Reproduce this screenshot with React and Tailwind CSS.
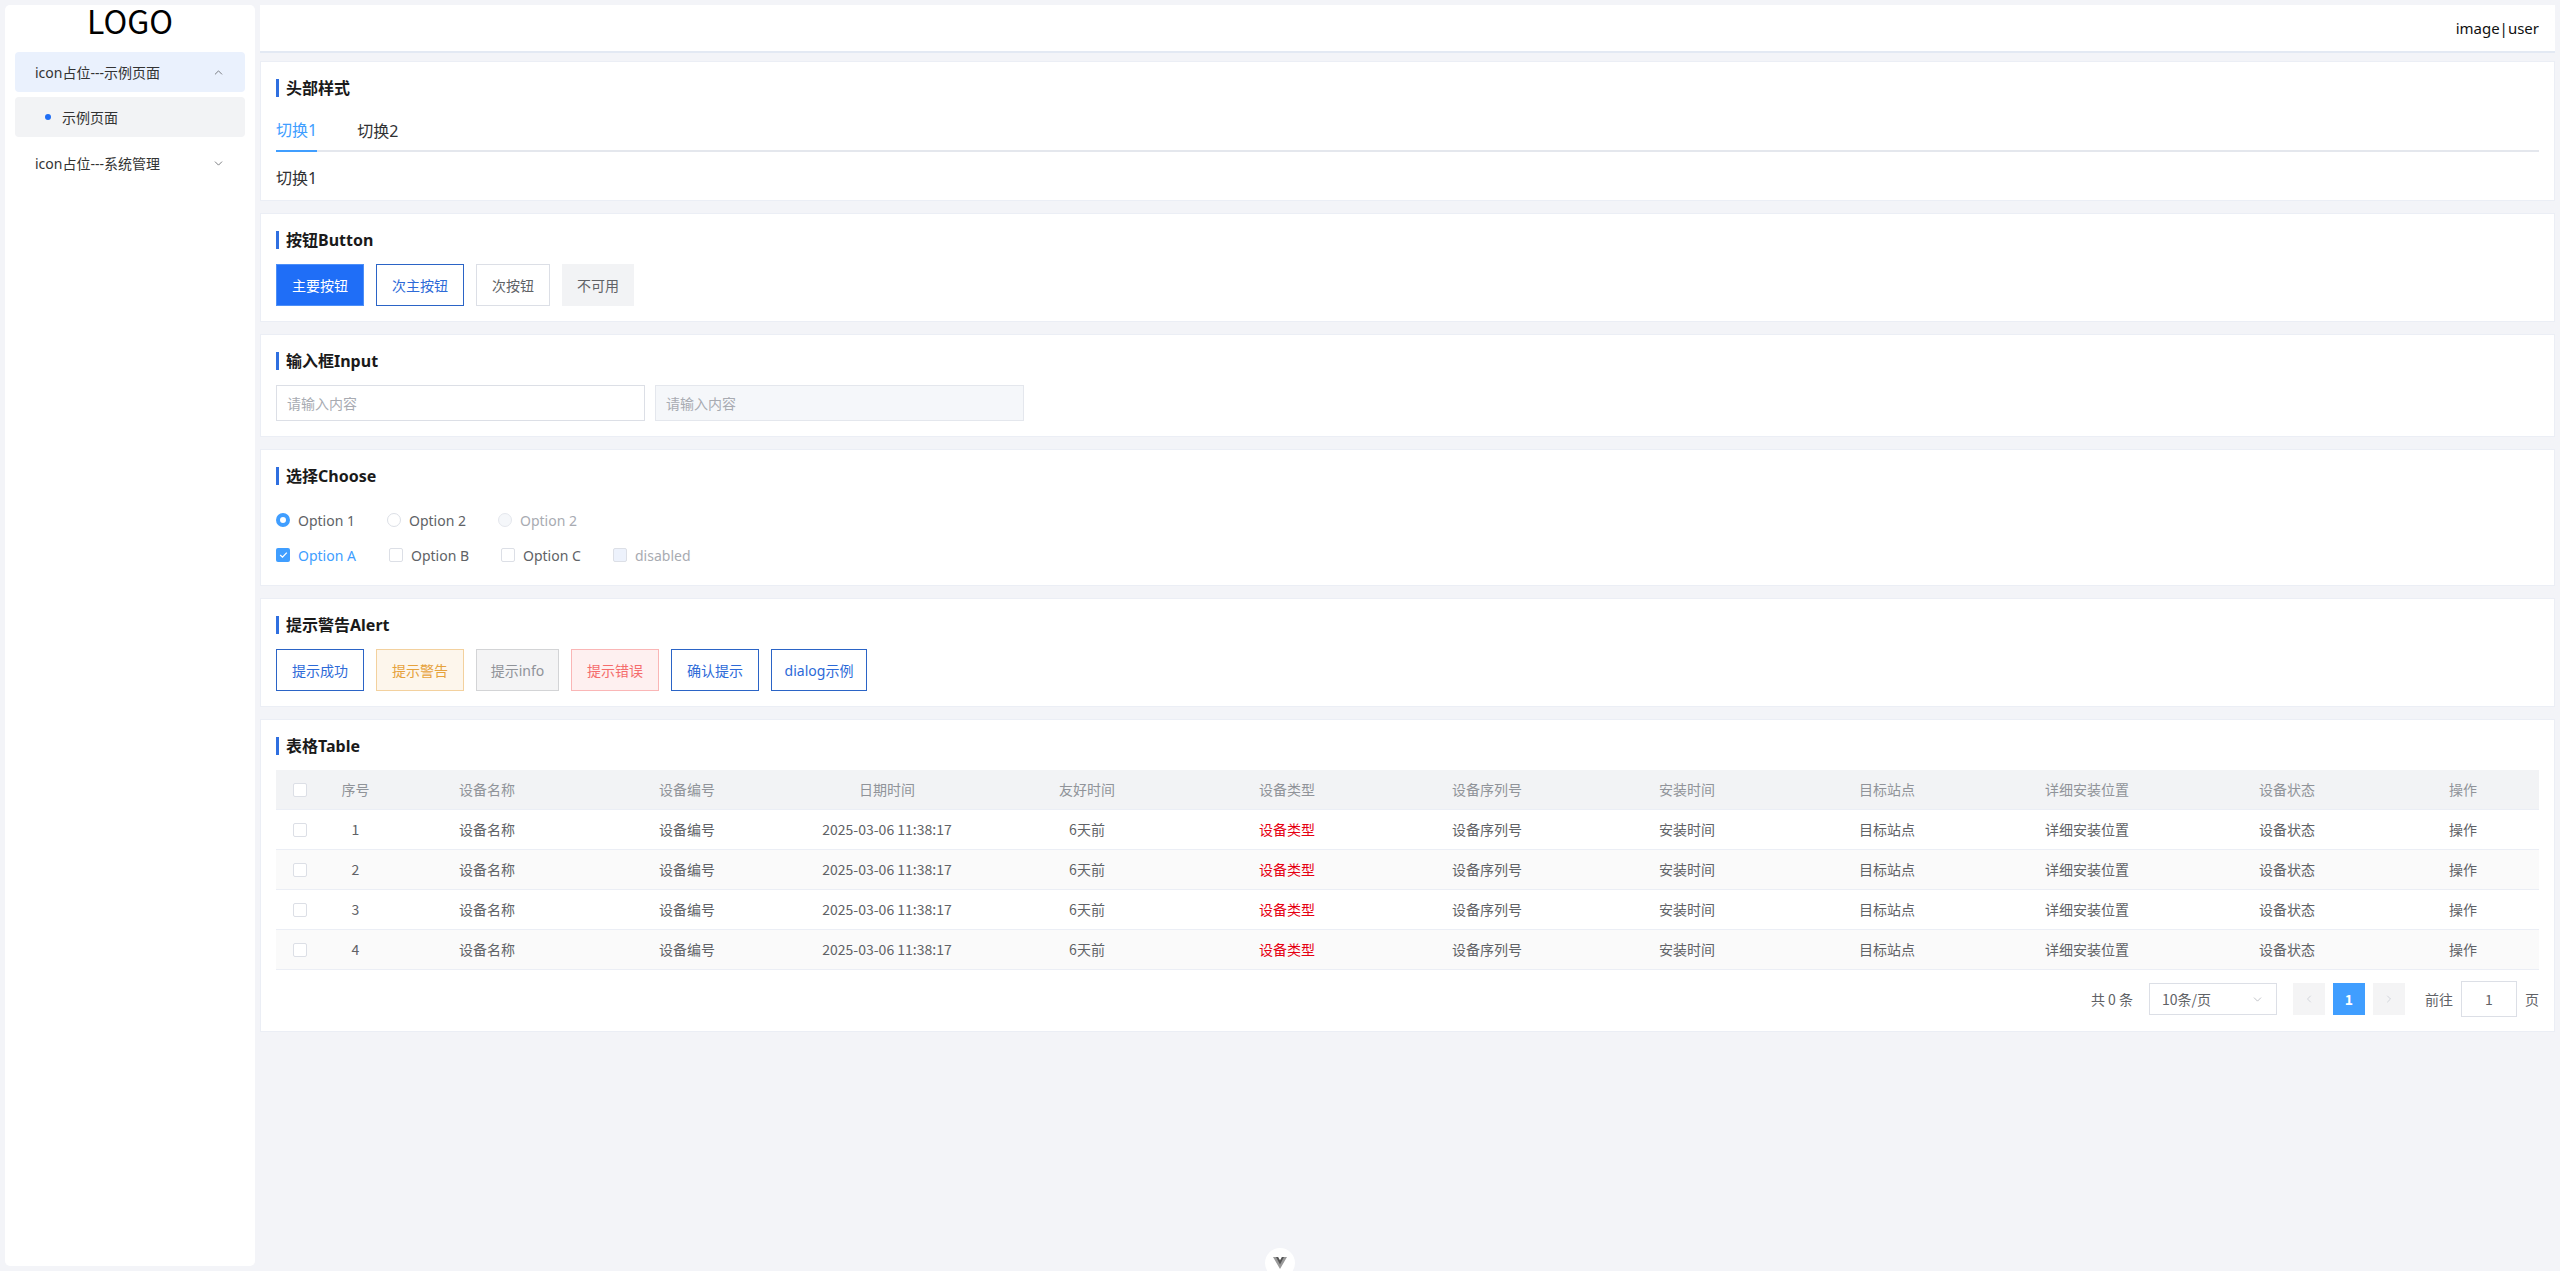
import React from "react";
import { ChevronUp, ChevronDown, ChevronLeft, ChevronRight } from "lucide-react";

const FONT = "font-['Noto_Sans','Noto_Sans_CJK_SC',sans-serif]";
const CJK = "font-['Noto_Sans_CJK_SC','Noto_Sans',sans-serif]";

function Title({ children }) {
  return (
    <div className="flex h-[20px] items-center">
      <div className="h-[18px] w-[3px] bg-[#2f6fe0]" />
      <div className="ml-[7px] text-[16px] font-bold leading-[20px] text-[#1a1a1a]">{children}</div>
    </div>
  );
}

function Card({ title, children, className = "" }) {
  return (
    <section className={`border border-[#ebeef5] bg-white px-[15px] pt-[16px] ${className}`}>
      <Title>{title}</Title>
      <div className="mt-[14px]">{children}</div>
    </section>
  );
}

function Check({ checked, disabled }) {
  if (checked)
    return (
      <span className="flex h-[14px] w-[14px] items-center justify-center rounded-[2px] bg-[#409eff]">
        <svg width="9" height="8" viewBox="0 0 9 8">
          <path d="M1.2 4 L3.5 6.2 L7.8 1.6" fill="none" stroke="#fff" strokeWidth="1.3" />
        </svg>
      </span>
    );
  return (
    <span
      className={`block h-[14px] w-[14px] rounded-[2px] border ${
        disabled ? "border-[#dcdfe6] bg-[#edf2fc]" : "border-[#dcdfe6] bg-white"
      }`}
    />
  );
}

const cols = ["设备名称", "设备编号", "日期时间", "友好时间", "设备类型", "设备序列号", "安装时间", "目标站点", "详细安装位置", "设备状态"];
const vals = ["设备名称", "设备编号", "2025-03-06 11:38:17", "6天前", "设备类型", "设备序列号", "安装时间", "目标站点", "详细安装位置", "设备状态"];

const GRID = "grid grid-cols-[48px_63px_repeat(10,200px)_1fr] items-center";

export default function App() {
  return (
    <div className={`relative flex h-[1271px] w-[2560px] gap-[5px] overflow-hidden bg-[#f3f4f8] p-[5px] text-[#303133] ${FONT}`}>
      {/* Sidebar */}
      <aside className="flex w-[250px] shrink-0 flex-col rounded-[5px] bg-white px-[10px]">
        <div className={`-mt-[3px] text-center text-[32px] leading-[36px] text-black ${CJK}`}>LOGO</div>
        <nav className="mt-[14px] flex flex-col gap-[5px] text-[14px]">
          <div className="flex h-[40px] items-center justify-between rounded-[4px] bg-[#eaf1fd] pl-[20px] pr-[20px] text-[#333]">
            <span>icon占位---示例页面</span>
            <ChevronUp size={13} strokeWidth={1.5} color="#606266" />
          </div>
          <div className="flex h-[40px] items-center rounded-[4px] bg-[#f2f3f5] pl-[30px] text-[#333]">
            <span className="h-[6px] w-[6px] rounded-full bg-[#1f6ef5]" />
            <span className="ml-[11px]">示例页面</span>
          </div>
          <div className="mt-[1px] flex h-[40px] items-center justify-between pl-[20px] pr-[20px] text-[#333]">
            <span>icon占位---系统管理</span>
            <ChevronDown size={13} strokeWidth={1.5} color="#606266" />
          </div>
        </nav>
      </aside>

      {/* Main */}
      <main className="flex min-w-0 flex-1 flex-col">
        <header className="flex h-[48px] shrink-0 items-center justify-end border-b-2 border-[#e3e9f3] bg-white pr-[16px] text-[15px] font-normal text-[#111]">
          image|user
        </header>

        <div className="mt-[8px] flex flex-col gap-[12px]">
          {/* Tabs card */}
          <section className="border border-[#ebeef5] bg-white px-[15px] pb-[11px] pt-[16px]">
            <Title>头部样式</Title>
            <div className="mt-[12px] flex h-[42px] border-b-2 border-[#e4e7ed] text-[16px]">
              <div className="-mb-[2px] flex h-[42px] items-center border-b-2 border-[#409eff] text-[#409eff]">切换1</div>
              <div className="-mb-[2px] ml-[40px] flex h-[42px] items-center text-[#303133]">切换2</div>
            </div>
            <div className="mt-[15px] text-[16px] leading-[22px] text-[#303133]">切换1</div>
          </section>

          {/* Buttons */}
          <Card title="按钮Button" className="pb-[15px]">
            <div className="flex gap-[12px] text-[14px]">
              <button className="h-[42px] border border-[#4d8ff7] bg-[#1f6ef7] px-[15px] text-white">主要按钮</button>
              <button className="h-[42px] border border-[#2b64c6] bg-white px-[15px] text-[#2d6ad8]">次主按钮</button>
              <button className="h-[42px] border border-[#dcdfe6] bg-white px-[15px] text-[#606266]">次按钮</button>
              <button className="h-[42px] bg-[#f2f3f5] px-[15px] text-[#606266]">不可用</button>
            </div>
          </Card>

          {/* Inputs */}
          <Card title="输入框Input" className="pb-[15px]">
            <div className="flex gap-[10px] text-[14px]">
              <div className="flex h-[36px] w-[369px] items-center border border-[#dcdfe6] bg-white pl-[10px] text-[#a8abb2]">请输入内容</div>
              <div className="flex h-[36px] w-[369px] items-center border border-[#e4e7ed] bg-[#f5f7fa] pl-[10px] text-[#a8abb2]">请输入内容</div>
            </div>
          </Card>

          {/* Choose */}
          <Card title="选择Choose" className="pb-[14px]">
            <div className="flex flex-col gap-[3px] pt-[4px] text-[14px]">
              <div className="flex h-[32px] items-center">
                <div className="flex w-[111px] items-center">
                  <span className="block h-[14px] w-[14px] rounded-full border-[4px] border-[#409eff] bg-white" />
                  <span className="ml-[8px] text-[#606266]">Option 1</span>
                </div>
                <div className="flex w-[111px] items-center">
                  <span className="block h-[14px] w-[14px] rounded-full border border-[#dcdfe6] bg-white" />
                  <span className="ml-[8px] text-[#606266]">Option 2</span>
                </div>
                <div className="flex w-[111px] items-center">
                  <span className="block h-[14px] w-[14px] rounded-full border border-[#e4e7ed] bg-[#f5f7fa]" />
                  <span className="ml-[8px] text-[#a8abb2]">Option 2</span>
                </div>
              </div>
              <div className="flex h-[32px] items-center">
                <div className="flex w-[113px] items-center">
                  <Check checked />
                  <span className="ml-[8px] text-[#409eff]">Option A</span>
                </div>
                <div className="flex w-[112px] items-center">
                  <Check />
                  <span className="ml-[8px] text-[#606266]">Option B</span>
                </div>
                <div className="flex w-[112px] items-center">
                  <Check />
                  <span className="ml-[8px] text-[#606266]">Option C</span>
                </div>
                <div className="flex items-center">
                  <Check disabled />
                  <span className="ml-[8px] text-[#a8abb2]">disabled</span>
                </div>
              </div>
            </div>
          </Card>

          {/* Alerts */}
          <Card title="提示警告Alert" className="pb-[15px]">
            <div className="flex gap-[12px] text-[14px]">
              <button className="h-[42px] w-[88px] border border-[#2b64c6] bg-white text-[#2d6ad8]">提示成功</button>
              <button className="h-[42px] w-[88px] border border-[#f3d19e] bg-[#fdf6ec] text-[#e6a23c]">提示警告</button>
              <button className="h-[42px] w-[83px] border border-[#d3d4d6] bg-[#f4f4f5] text-[#909399]">提示info</button>
              <button className="h-[42px] w-[88px] border border-[#fab6b6] bg-[#fef0f0] text-[#f56c6c]">提示错误</button>
              <button className="h-[42px] w-[88px] border border-[#2b64c6] bg-white text-[#2d6ad8]">确认提示</button>
              <button className="h-[42px] w-[96px] border border-[#2b64c6] bg-white text-[#2d6ad8]">dialog示例</button>
            </div>
          </Card>

          {/* Table */}
          <Card title="表格Table" className="pb-[14px]">
            <div className={`text-[14px] ${CJK}`}>
              <div className={`${GRID} h-[40px] border-b border-[#ebeef5] bg-[#f2f3f5] text-[#909399]`}>
                <div className="flex justify-center"><Check /></div>
                <div className="text-center">序号</div>
                {cols.map((c) => (
                  <div key={c} className="text-center">{c}</div>
                ))}
                <div className="text-center">操作</div>
              </div>
              {[1, 2, 3, 4].map((n) => (
                <div
                  key={n}
                  className={`${GRID} h-[40px] border-b border-[#ebeef5] text-[#606266] ${n % 2 === 0 ? "bg-[#fafafa]" : "bg-white"}`}
                >
                  <div className="flex justify-center"><Check /></div>
                  <div className="text-center">{n}</div>
                  {vals.map((v, i) => (
                    <div key={i} className={`text-center ${i === 4 ? "text-[#e60012]" : ""}`}>{v}</div>
                  ))}
                  <div className="text-center">操作</div>
                </div>
              ))}
            </div>
            <div className={`mt-[11px] flex h-[36px] items-center justify-end text-[14px] text-[#606266] ${CJK}`}>
              <span>共 0 条</span>
              <div className="ml-[16px] flex h-[32px] w-[128px] items-center justify-between border border-[#dcdfe6] pl-[12px] pr-[12px]">
                <span>10条/页</span>
                <ChevronDown size={13} strokeWidth={1.3} color="#a8abb2" />
              </div>
              <div className="ml-[16px] flex h-[32px] w-[32px] items-center justify-center bg-[#f4f4f5]">
                <ChevronLeft size={12} strokeWidth={1.3} color="#c0c4cc" />
              </div>
              <div className="ml-[8px] flex h-[32px] w-[32px] items-center justify-center bg-[#409eff] font-bold text-white">1</div>
              <div className="ml-[8px] flex h-[32px] w-[32px] items-center justify-center bg-[#f4f4f5]">
                <ChevronRight size={12} strokeWidth={1.3} color="#c0c4cc" />
              </div>
              <span className="ml-[20px]">前往</span>
              <div className="ml-[8px] flex h-[36px] w-[56px] items-center justify-center border border-[#dcdfe6]">1</div>
              <span className="ml-[8px]">页</span>
            </div>
          </Card>
        </div>
      </main>

      {/* floating bottom toggle */}
      <div className="absolute left-[1265px] top-[1248px] flex h-[30px] w-[30px] justify-center rounded-full bg-white pt-[9px]">
        <svg width="14" height="12" viewBox="0 0 14 12">
          <polygon points="0,0 5,0 7,3.5 9,0 14,0 7,12" fill="#9a9a9a" />
          <polygon points="3,0 5,0 7,3.5 9,0 11,0 7,7.5" fill="#555" />
        </svg>
      </div>
    </div>
  );
}
